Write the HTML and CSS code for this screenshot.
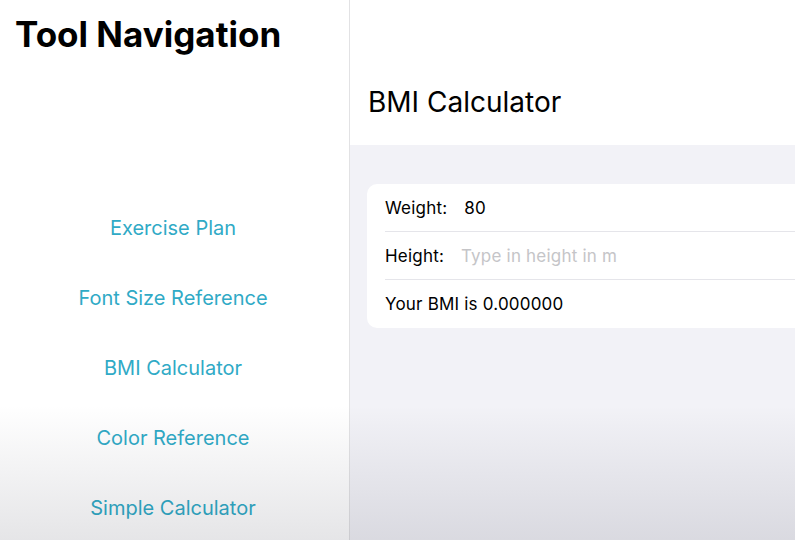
FILE: index.html
```html
<!DOCTYPE html>
<html>
<head>
<meta charset="utf-8">
<link rel="stylesheet" href="styles.css">
</head>
<body>
<div class="app">
  <aside class="sidebar">
    <h1 class="nav-title">Tool Navigation</h1>
    <nav class="links">
      <a class="link">Exercise Plan</a>
      <a class="link">Font Size Reference</a>
      <a class="link">BMI Calculator</a>
      <a class="link">Color Reference</a>
      <a class="link">Simple Calculator</a>
    </nav>
  </aside>
  <main class="detail">
    <header class="detail-header">
      <h2 class="detail-title">BMI Calculator</h2>
    </header>
    <section class="content">
      <div class="card">
        <div class="row">
          <span class="label">Weight:</span>
          <span class="value">80</span>
        </div>
        <div class="row">
          <span class="label">Height:</span>
          <span class="placeholder">Type in height in m</span>
        </div>
        <div class="row">
          <span class="label">Your BMI is 0.000000</span>
        </div>
      </div>
    </section>
  </main>
  <div class="shade"></div>
</div>
</body>
</html>
```

FILE: styles.css
```css
* { box-sizing: border-box; }
html, body { margin: 0; padding: 0; }
body {
  font-family: "Inter", "Noto Sans", sans-serif;
  background: #ffffff;
  width: 795px;
  height: 540px;
  overflow: hidden;
}
.app {
  position: relative;
  display: flex;
  width: 795px;
  height: 540px;
  overflow: hidden;
}
.sidebar {
  width: 350px;
  flex: none;
  border-right: 1px solid #e2e2e4;
  background: #ffffff;
}
.nav-title {
  margin: 0;
  padding: 13px 0 0 15px;
  font-size: 35px;
  line-height: 42px;
  font-weight: 700;
  color: #000000;
}
.links {
  display: flex;
  flex-direction: column;
  margin-top: 138px;
}
.link {
  height: 70px;
  display: flex;
  align-items: center;
  justify-content: center;
  font-size: 20px;
  color: #30aac6;
  padding-right: 3px;
}
.detail {
  flex: 1;
  display: flex;
  flex-direction: column;
  min-width: 0;
}
.detail-header {
  height: 145px;
  background: #ffffff;
  padding: 85px 0 0 18px;
}
.detail-title {
  margin: 0;
  font-size: 28px;
  line-height: 34px;
  font-weight: 400;
  color: #000000;
}
.content {
  flex: 1;
  background: #f2f2f7;
  padding: 39px 0 0 17px;
  overflow: hidden;
}
.card {
  background: #ffffff;
  border-radius: 10px 0 0 10px;
  margin-right: 0;
  padding-left: 18px;
}
.row {
  height: 48px;
  display: flex;
  align-items: center;
  gap: 17px;
  font-size: 17px;
  letter-spacing: 0.2px;
  color: #000000;
  border-bottom: 1px solid #e5e5ea;
}
.row:last-child { border-bottom: none; }
.placeholder { color: #c5c5c8; }
.shade {
  position: absolute;
  left: 0;
  top: 0;
  width: 100%;
  height: 100%;
  pointer-events: none;
  background: linear-gradient(to bottom, rgba(20,20,40,0) 0, rgba(20,20,40,0) 405px, rgba(20,20,40,0.11) 540px);
}
```
